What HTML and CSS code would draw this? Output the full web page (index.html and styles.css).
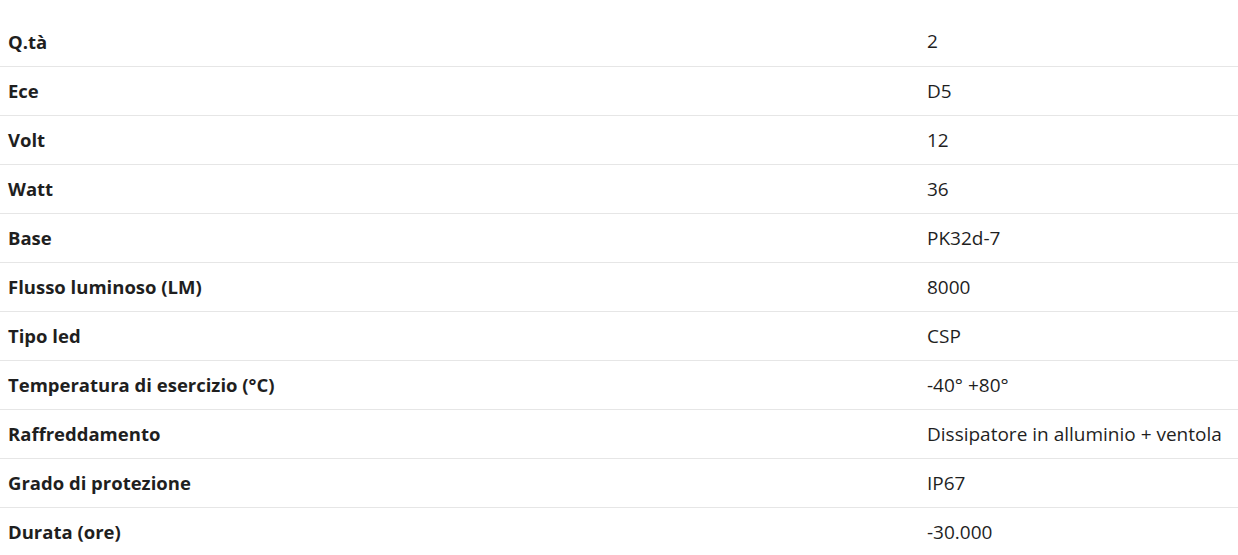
FILE: index.html
```html
<!DOCTYPE html>
<html lang="it">
<head>
<meta charset="utf-8">
<title>Specifiche</title>
<link rel="stylesheet" href="styles.css">
</head>
<body>
<table class="specs">
<tbody>
<tr><th>Q.tà</th><td>2</td></tr>
<tr><th>Ece</th><td>D5</td></tr>
<tr><th>Volt</th><td>12</td></tr>
<tr><th>Watt</th><td>36</td></tr>
<tr><th>Base</th><td>PK32d-7</td></tr>
<tr><th>Flusso luminoso (LM)</th><td>8000</td></tr>
<tr><th>Tipo led</th><td>CSP</td></tr>
<tr><th>Temperatura di esercizio (°C)</th><td>-40° +80°</td></tr>
<tr><th>Raffreddamento</th><td>Dissipatore in alluminio + ventola</td></tr>
<tr><th>Grado di protezione</th><td>IP67</td></tr>
<tr><th>Durata (ore)</th><td>-30.000</td></tr>
</tbody>
</table>
</body>
</html>
```

FILE: styles.css
```css
html, body {
  margin: 0;
  padding: 0;
  background: #fff;
}
body {
  padding-top: 17px;
  font-family: "Open Sans", Lato, sans-serif;
  color: #1f1f1f;
}
.specs {
  width: 100%;
  border-collapse: collapse;
  table-layout: fixed;
}
.specs th,
.specs td {
  height: 49px;
  padding: 0 8px;
  text-align: left;
  vertical-align: middle;
  border-bottom: 1px solid #e6e6e6;
  box-sizing: border-box;
}
.specs th {
  width: 919px;
  font-size: 18.5px;
  font-weight: 700;
}
.specs td {
  font-size: 19px;
  font-weight: 400;
}
.specs tr:last-child th,
.specs tr:last-child td {
  border-bottom: none;
}
```
